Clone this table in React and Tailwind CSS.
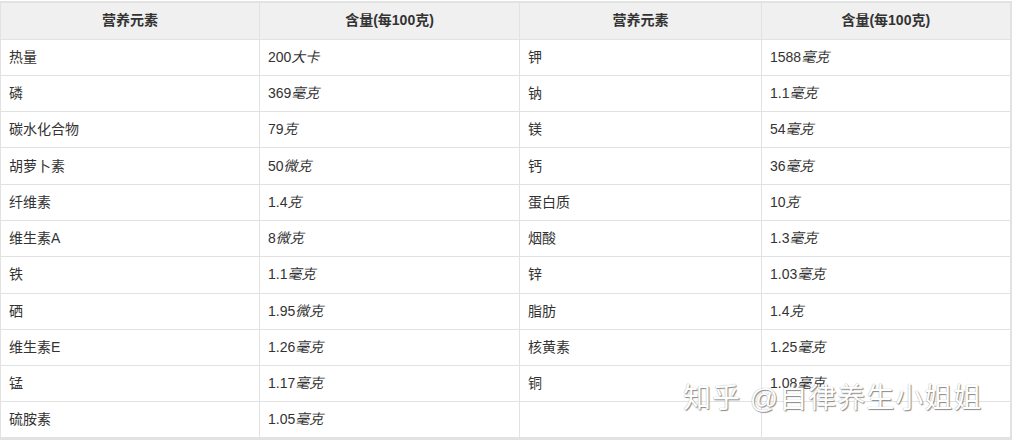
const rows = [
  ["热量", "200", "大卡", "钾", "1588", "毫克"],
  ["磷", "369", "毫克", "钠", "1.1", "毫克"],
  ["碳水化合物", "79", "克", "镁", "54", "毫克"],
  ["胡萝卜素", "50", "微克", "钙", "36", "毫克"],
  ["纤维素", "1.4", "克", "蛋白质", "10", "克"],
  ["维生素A", "8", "微克", "烟酸", "1.3", "毫克"],
  ["铁", "1.1", "毫克", "锌", "1.03", "毫克"],
  ["硒", "1.95", "微克", "脂肪", "1.4", "克"],
  ["维生素E", "1.26", "毫克", "核黄素", "1.25", "毫克"],
  ["锰", "1.17", "毫克", "铜", "1.08", "毫克"],
  ["硫胺素", "1.05", "毫克", "", "", ""],
];

function Amount({ num, unit }) {
  if (!num) return null;
  return (
    <span>
      {num}
      <span className="italic">{unit}</span>
    </span>
  );
}

export default function App() {
  return (
    <div
      className="relative w-[1013px] h-[441px] bg-white text-[14px] text-[#333]"
      style={{ fontFamily: '"Liberation Sans", "Noto Sans CJK SC", sans-serif' }}
    >
      <div className="pt-px">
        <table className="table-fixed border-collapse w-[1010px] border-t-2 border-b-[3px] border-l border-r-2 border-[#e2e2e2]">
          <colgroup>
            <col className="w-[259px]" />
            <col className="w-[260px]" />
            <col className="w-[242px]" />
            <col className="w-[249px]" />
          </colgroup>
          <thead>
            <tr className="bg-[#f0f0f0] h-[37px]">
              <th className="border border-[#e2e2e2] font-bold text-center">营养元素</th>
              <th className="border border-[#e2e2e2] font-bold text-center">含量(每100克)</th>
              <th className="border border-[#e2e2e2] font-bold text-center">营养元素</th>
              <th className="border border-[#e2e2e2] font-bold text-center">含量(每100克)</th>
            </tr>
          </thead>
          <tbody>
            {rows.map((r, i) => (
              <tr key={i} className="h-[36.3px]">
                <td className="border border-[#e2e2e2] px-2">{r[0]}</td>
                <td className="border border-[#e2e2e2] px-2">
                  <Amount num={r[1]} unit={r[2]} />
                </td>
                <td className="border border-[#e2e2e2] px-2">{r[3]}</td>
                <td className="border border-[#e2e2e2] px-2">
                  <Amount num={r[4]} unit={r[5]} />
                </td>
              </tr>
            ))}
          </tbody>
        </table>
      </div>
      <div
        className="absolute left-[683px] top-[385px] text-[28px] leading-none text-white tracking-[1px]"
        style={{ textShadow: "1px 1px 1px #8a8a8a, 0 0 1px #999" }}
      >
        知乎 @自律养生小姐姐
      </div>
    </div>
  );
}
